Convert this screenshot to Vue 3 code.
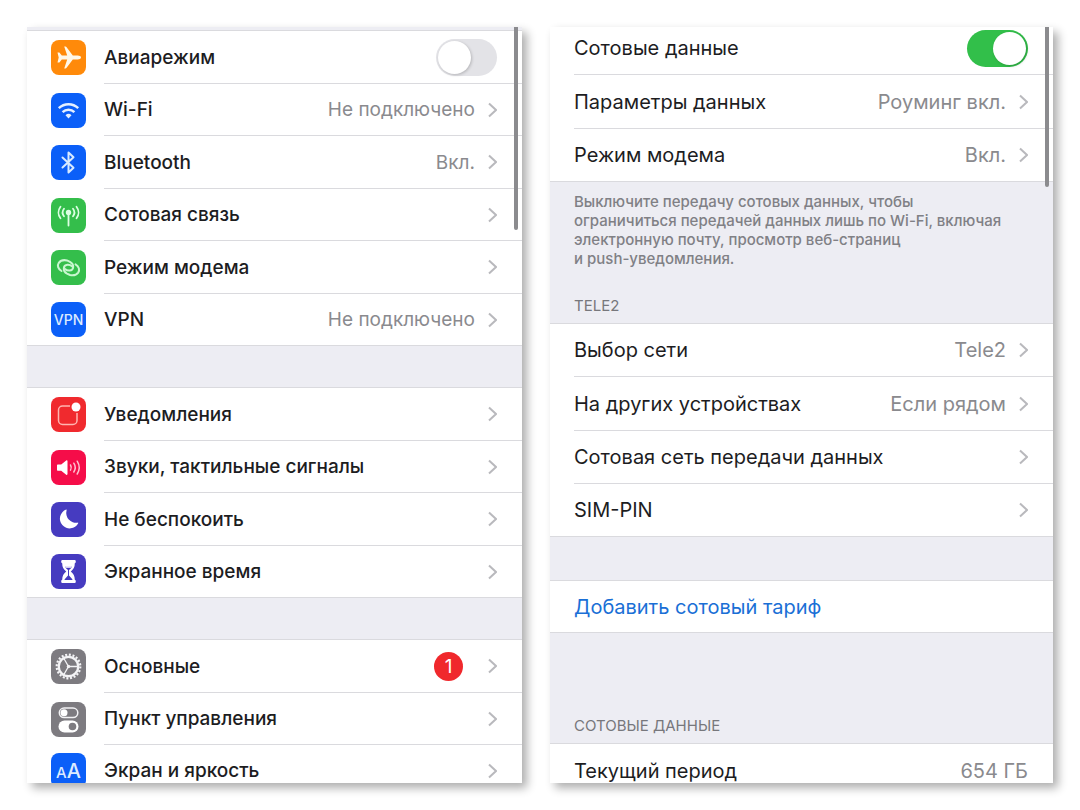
<template>
  <main class="page">
    <section class="panel settings">
      <div class="scrollbar"></div>
      <div v-for="(group, i) in groups" :key="i" class="group">
        <component
          :is="row.toggle ? 'label' : 'a'"
          v-for="row in group"
          :key="row.title"
          :href="row.toggle ? undefined : '#'"
          class="row"
        >
          <span class="icon" :class="row.icon">
            <span v-if="row.icon === 'vpn'" class="vpn-text">VPN</span>
            <span v-else-if="row.icon === 'display'" class="aa-text"><small>A</small>A</span>
            <svg v-else viewBox="0 0 35 35" aria-hidden="true">
              <path v-if="row.icon === 'plane'" fill="#fff8e8" d="M30 17.500c0-1.200-1.600-1.900-3.200-1.900h-5L15.600 7.200c-.3-.4-.7-.6-1.200-.6h-1.200l3 9h-5.400l-2.200-2.900c-.2-.2-.4-.3-.7-.3H6.500l1.200 5.100-1.200 5.100h1.400c.3 0 .5-.1.7-.3l2.200-2.900h5.400l-3 9h1.200c.5 0 .9-.2 1.200-.6l6.200-8.400h5c1.600 0 3.200-.7 3.200-1.900z" />
              <g v-else-if="row.icon === 'wifi'" fill="none" stroke="#e4f0ff" stroke-width="2.500">
                <path d="M7.800 15.200a14 14 0 0 1 19.400 0" />
                <path d="M11.600 19.200a8.500 8.500 0 0 1 11.800 0" />
                <path d="M17.500 25.600l-3-3.300a4.300 4.300 0 0 1 6 0z" fill="#e4f0ff" stroke="none" />
              </g>
              <path v-else-if="row.icon === 'bluetooth'" fill="none" stroke="#d8eaff" stroke-width="2" stroke-linejoin="round" stroke-linecap="round" d="M11.500 12.500l11 10.200-5 4.800v-20l5 4.800-11 10.200" />
              <g v-else-if="row.icon === 'cell'" fill="none" stroke="#dcffe2" stroke-width="1.800" stroke-linecap="round">
                <circle cx="17.500" cy="14.500" r="2.700" fill="#dcffe2" stroke="none" />
                <path d="M17.500 15v12.500" />
                <path d="M13 18.200a6 6 0 0 1 0-7.400M22 18.200a6 6 0 0 0 0-7.400" />
                <path d="M9.500 20.300a9.500 9.500 0 0 1 0-11.600M25.500 20.300a9.500 9.500 0 0 0 0-11.600" />
              </g>
              <g v-else-if="row.icon === 'hotspot'" fill="none" stroke="#c9f7d0" stroke-width="2" stroke-linecap="round">
                <path d="M10.500 21C7 19 6 15.500 7.800 12.800C9.800 10 13 9.800 16 10.400L19 11.800C23.500 14.200 23.200 20.200 18.500 20.600C16.500 20.700 15 20 14 19" />
                <path d="M24.500 14.400C28 16.400 29 19.900 27.200 22.600C25.200 25.400 22 25.600 19 25L16 23.600C11.500 21.200 11.800 15.200 16.500 14.800C18.500 14.700 20 15.400 21 16.400" />
              </g>
              <g v-else-if="row.icon === 'notify'">
                <path d="M19 9h-7.500a4 4 0 0 0-4 4v10.500a4 4 0 0 0 4 4H22a4 4 0 0 0 4-4V16" fill="none" stroke="#ffb5b0" stroke-width="1.500" />
                <circle cx="25" cy="10" r="4.500" fill="#fff" />
              </g>
              <g v-else-if="row.icon === 'sound'" fill="none" stroke="#ffc2d0" stroke-width="1.500" stroke-linecap="round">
                <path d="M6 15.500c0-.7.400-1 1-1h3.200l5-4c.7-.5 1.300-.2 1.300.6v13c0 .8-.6 1.100-1.300.6l-5-4H7c-.6 0-1-.3-1-1z" fill="#fff" stroke="none" />
                <path d="M19.500 15a5 5 0 0 1 0 5.200M22.800 13.200a8 8 0 0 1 0 8.800M26.200 11.200a12 12 0 0 1 0 12.800" />
              </g>
              <path v-else-if="row.icon === 'moon'" fill="#fff" d="M15.200 7.600a9.700 9.700 0 1 0 12 13.600c.2-.5-.1-.7-.6-.5A9.900 9.900 0 0 1 15.600 8.300c.2-.5 0-.8-.4-.7z" />
              <g v-else-if="row.icon === 'hourglass'">
                <path fill="#fff" d="M11.500 6h12c1 0 1.300.6 1.300 1.500s-.4 1.600-1 1.700c0 4-1.300 6-4 8.300 2.700 2.300 4 4.300 4 8.300.6.100 1 .8 1 1.600 0 .9-.3 1.500-1.300 1.500h-12c-1 0-1.300-.6-1.300-1.500s.4-1.500 1-1.600c0-4 1.300-6 4-8.300-2.700-2.300-4-4.300-4-8.300-.6-.1-1-.8-1-1.700S10.500 6 11.500 6z" />
                <path fill="#463bc0" d="M14 12.500h7c-.6 1.500-1.700 2.700-3 3.600v5.400l3.300 3.700c.3.400.2.800-.3.800h-7c-.5 0-.6-.4-.3-.8l3.300-3.700v-5.400c-1.300-.9-2.400-2.100-3-3.600z" />
                <path fill="#fff" d="M14 12.300h7l-.8 1.500h-5.400z" />
              </g>
              <g v-else-if="row.icon === 'gear'" fill="none" stroke="#f4f4f6">
                <circle cx="17.500" cy="17.500" r="11.800" stroke-width="2.200" stroke-dasharray="2 1.707" />
                <circle cx="17.500" cy="17.500" r="9.700" stroke-width="2.200" />
                <path d="M17.500 17.500h9M17.500 17.500l-4.600-8M17.500 17.500l-4.600 8" stroke-width="1.300" />
                <circle cx="17.500" cy="17.500" r="1.700" fill="#f4f4f6" stroke="none" />
              </g>
              <g v-else-if="row.icon === 'control'">
                <rect x="8.300" y="6" width="18.500" height="9.600" rx="4.800" fill="none" stroke="#f2f2f4" stroke-width="1.500" />
                <circle cx="13" cy="10.800" r="3.500" fill="#fff" />
                <rect x="7.500" y="18.500" width="20" height="12" rx="6" fill="#fff" />
                <circle cx="21.500" cy="24.500" r="3.800" fill="#7d7b80" />
              </g>
            </svg>
          </span>
          <span class="body">
            <span class="title">{{ row.title }}</span>
            <span v-if="row.value" class="value">{{ row.value }}</span>
            <span v-if="row.badge" class="badge">{{ row.badge }}</span>
            <input v-if="row.toggle" v-model="airplane" type="checkbox" class="switch" />
            <svg v-else class="chevron" viewBox="0 0 9 16" aria-hidden="true"><path d="M1 1.500l7 6.500-7 6.500" /></svg>
          </span>
        </component>
      </div>
    </section>

    <section class="panel cellular">
      <div class="scrollbar"></div>
      <div class="group data">
        <label class="row">
          <span class="body">
            <span class="title">Сотовые данные</span>
            <input v-model="cellData" type="checkbox" class="switch" />
          </span>
        </label>
        <a v-for="row in dataRows" :key="row.title" href="#" class="row">
          <span class="body">
            <span class="title">{{ row.title }}</span>
            <span class="value">{{ row.value }}</span>
            <svg class="chevron" viewBox="0 0 9 16" aria-hidden="true"><path d="M1 1.500l7 6.500-7 6.500" /></svg>
          </span>
        </a>
      </div>
      <p class="note">
        Выключите передачу сотовых данных, чтобы<br />
        ограничиться передачей данных лишь по Wi-Fi, включая<br />
        электронную почту, просмотр веб-страниц<br />
        и push-уведомления.
      </p>
      <h2 class="heading">TELE2</h2>
      <div class="group">
        <a v-for="row in simRows" :key="row.title" href="#" class="row">
          <span class="body">
            <span class="title">{{ row.title }}</span>
            <span v-if="row.value" class="value">{{ row.value }}</span>
            <svg class="chevron" viewBox="0 0 9 16" aria-hidden="true"><path d="M1 1.500l7 6.500-7 6.500" /></svg>
          </span>
        </a>
      </div>
      <div class="group plan">
        <button type="button" class="row add">Добавить сотовый тариф</button>
      </div>
      <h2 class="heading usage">СОТОВЫЕ ДАННЫЕ</h2>
      <div class="group">
        <div class="row">
          <span class="body">
            <span class="title">Текущий период</span>
            <span class="value">654 ГБ</span>
          </span>
        </div>
      </div>
    </section>
  </main>
</template>

<script setup>
import { ref } from 'vue'

const airplane = ref(false)
const cellData = ref(true)

const groups = [
  [
    { title: 'Авиарежим', icon: 'plane', toggle: true },
    { title: 'Wi-Fi', icon: 'wifi', value: 'Не подключено' },
    { title: 'Bluetooth', icon: 'bluetooth', value: 'Вкл.' },
    { title: 'Сотовая связь', icon: 'cell' },
    { title: 'Режим модема', icon: 'hotspot' },
    { title: 'VPN', icon: 'vpn', value: 'Не подключено' },
  ],
  [
    { title: 'Уведомления', icon: 'notify' },
    { title: 'Звуки, тактильные сигналы', icon: 'sound' },
    { title: 'Не беспокоить', icon: 'moon' },
    { title: 'Экранное время', icon: 'hourglass' },
  ],
  [
    { title: 'Основные', icon: 'gear', badge: 1 },
    { title: 'Пункт управления', icon: 'control' },
    { title: 'Экран и яркость', icon: 'display' },
  ],
]

const dataRows = [
  { title: 'Параметры данных', value: 'Роуминг вкл.' },
  { title: 'Режим модема', value: 'Вкл.' },
]

const simRows = [
  { title: 'Выбор сети', value: 'Tele2' },
  { title: 'На других устройствах', value: 'Если рядом' },
  { title: 'Сотовая сеть передачи данных' },
  { title: 'SIM-PIN' },
]
</script>

<style>
body { margin: 0; background: #fff; }
</style>

<style scoped>
.page { box-sizing: border-box; height: 100vh; padding: 27px; display: grid; grid-template-columns: 495fr 503fr; gap: 28px; font-family: Inter, "Liberation Sans", sans-serif; font-size: 20px; color: #1d1d1f; }
.panel { position: relative; display: flex; flex-direction: column; overflow: hidden; background: #ededf3; box-shadow: 5px 5px 9px rgba(0, 0, 0, 0.32); min-width: 0; }
.scrollbar { position: absolute; z-index: 1; top: 0; right: 4px; width: 4px; height: 203px; border-radius: 0 0 2px 2px; background: #8b8b8e; }
.cellular .scrollbar { height: 160px; }

.group { flex: none; background: #fff; border-top: 1px solid #dadade; border-bottom: 1px solid #dadade; }
.row { box-sizing: border-box; width: 100%; height: 53px; display: flex; align-items: center; padding-left: 24px; color: inherit; text-decoration: none; }
.body { box-sizing: border-box; flex: 1; align-self: stretch; display: flex; align-items: center; padding-right: 25px; border-bottom: 1px solid #dadade; min-width: 0; }
.row:last-child .body { border-bottom: 0; }
.title { flex: 1; white-space: nowrap; }
.value { color: #8a8a8e; white-space: nowrap; }
.chevron { width: 9px; height: 16px; margin-left: 13px; fill: none; stroke: #b9b9bd; stroke-width: 2; }
.badge { width: 29px; height: 29px; line-height: 29px; margin-right: 12px; border-radius: 50%; background: #f0282c; color: #fff; text-align: center; }

.settings { box-sizing: border-box; padding-top: 3px; font-size: 19px; }
.settings .title { font-weight: 500; }
.settings .group { margin-bottom: 41px; }
.settings .row:nth-child(even) { height: 52px; }
.settings .row:last-child { height: 51px; }

.icon { flex: none; width: 35px; height: 35px; margin-right: 18px; border-radius: 8px; display: flex; align-items: center; justify-content: center; color: #dcebff; background: #0b5ff8; }
.icon svg { width: 35px; height: 35px; }
.plane { background: #ff8a0a; }
.cell, .hotspot { background: #34be4b; }
.notify { background: #f02a2e; }
.sound { background: #f50d49; }
.moon, .hourglass { background: #463bc0; }
.gear, .control { background: #7d7b80; }
.vpn-text { font-size: 14px; font-weight: 500; }
.aa-text { font-size: 20px; font-weight: 500; }
.aa-text small { font-size: 15px; }

.switch { appearance: none; flex: none; box-sizing: border-box; width: 61px; height: 37px; margin: 0; padding: 2px; border-radius: 19px; background: #e3e3e7; cursor: pointer; }
.switch::before { content: ""; display: block; width: 33px; height: 33px; border-radius: 50%; background: #fff; box-shadow: 1px 1px 3px rgba(0, 0, 0, 0.2); }
.switch:checked { background: #32bf4a; }
.switch:checked::before { margin-left: auto; }

.cellular .row:nth-child(even) { height: 54px; }
.cellular .row:nth-child(n + 2):last-child { height: 52px; }
/* first group is scrolled slightly under the top edge */
.data { margin-top: -6px; }
.note { margin: 10px 24px 0; font-size: 15px; line-height: 19px; font-weight: 500; color: #808085; white-space: nowrap; }
.heading { margin: 28px 24px 8px; font-size: 15px; line-height: 19px; font-weight: 400; color: #77777c; }
.plan { margin-top: 43px; }
.cellular .add { height: 51px; padding-top: 0; padding-bottom: 0; border: 0; background: none; font: inherit; color: #1a6fd6; text-align: left; cursor: pointer; }
.usage { margin-top: 83px; }
</style>
